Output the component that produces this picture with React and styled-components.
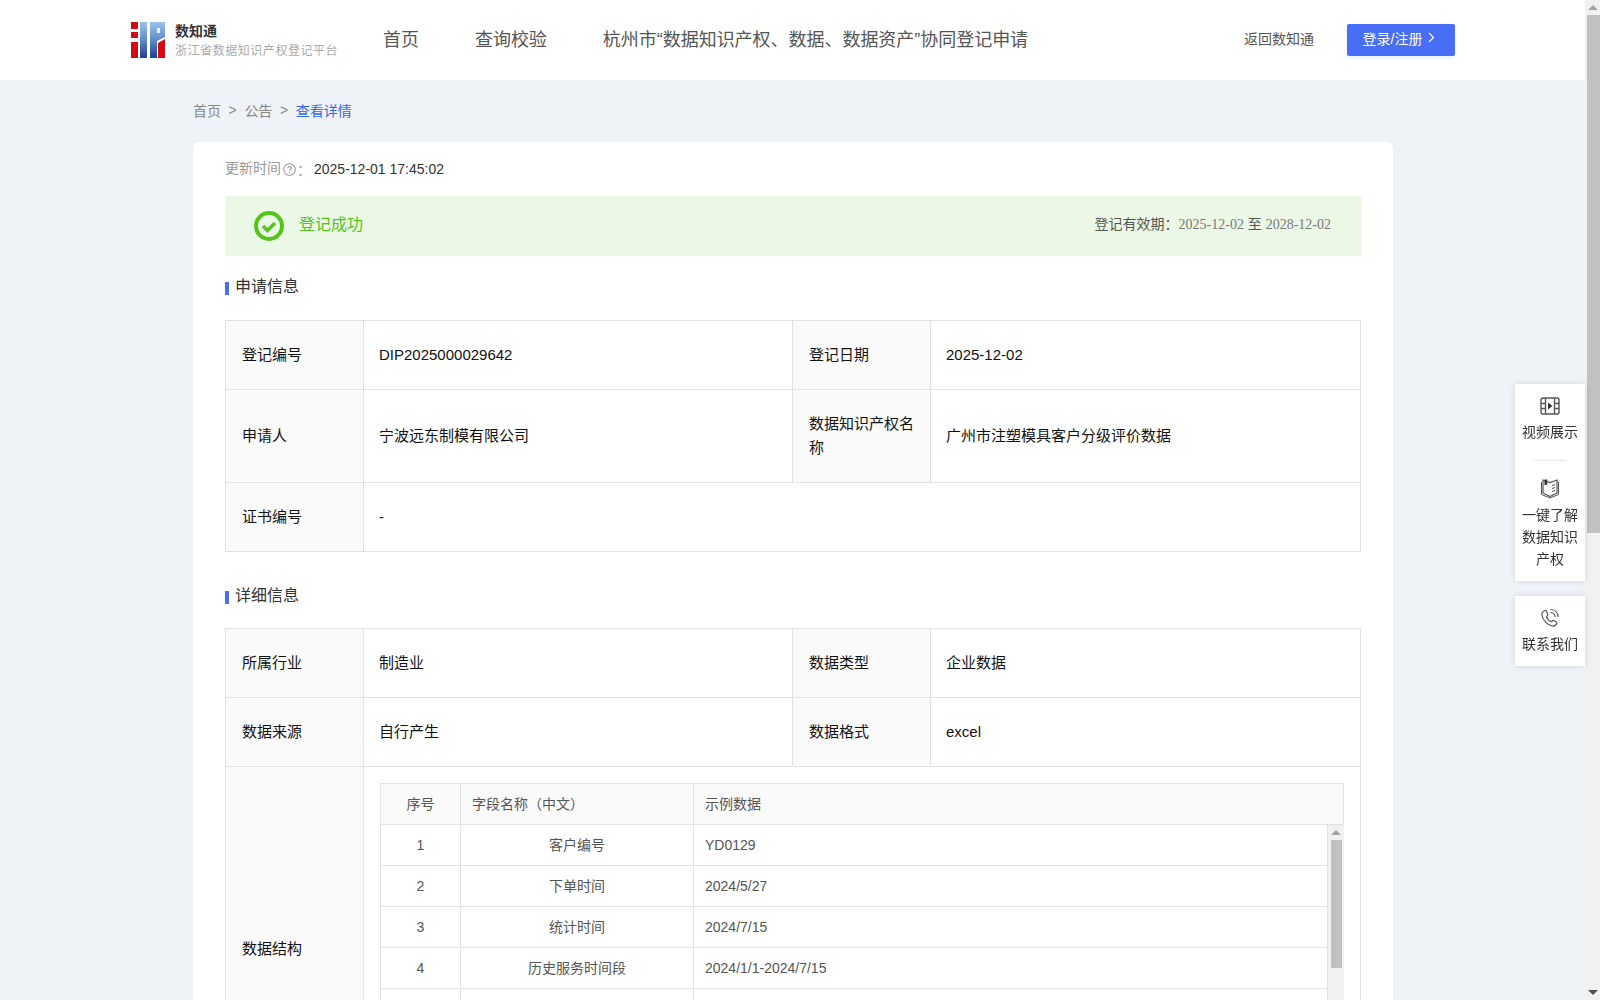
import React from 'react'
import styled, { createGlobalStyle } from 'styled-components'

const GlobalStyle = createGlobalStyle`
  html, body {
    margin: 0;
    padding: 0;
    height: 100%;
    overflow: hidden;
    font-family: "Liberation Sans", "Noto Sans CJK SC", sans-serif;
    font-size: 14px;
    color: #333;
  }
  * {
    box-sizing: border-box;
  }
`

const Page = styled.div`
  height: 100vh;
  display: flex;
  background: #eff2f6;
`
const Content = styled.div`
  flex: 1;
  min-width: 0;
  overflow-y: auto;
  scrollbar-width: none;
`
const Track = styled.div`
  width: ${p => p.$w}px;
  flex: none;
  display: flex;
  flex-direction: column;
  align-items: flex-end;
  background: #f1f1f1;
`
const ArrowBox = styled.div`
  width: 100%;
  height: 15px;
  flex: none;
  display: flex;
  align-items: center;
  justify-content: center;
`
const ArrowUp = styled.i`
  border-left: 5px solid transparent;
  border-right: 5px solid transparent;
  border-bottom: 5px solid #a3a3a3;
`
const ArrowDown = styled.i`
  border-left: 5px solid transparent;
  border-right: 5px solid transparent;
  border-top: 5px solid #505050;
`
const Thumb = styled.div`
  width: ${p => p.$w}px;
  height: ${p => p.$h}px;
  margin-right: ${p => p.$mr}px;
  background: #c1c1c1;
`
const TrackGap = styled.div`
  flex: 1;
`
const Header = styled.header`
  height: 80px;
  background: #fff;
  display: flex;
  align-items: center;
  padding: 0 130px 0 131px;
`
const Brand = styled.div`
  display: flex;
  align-items: center;
  gap: 10px;
  width: 252px;
`
const BrandText = styled.div`
  display: flex;
  flex-direction: column;
  gap: 3px;
`
const BrandName = styled.div`
  font-size: 14px;
  line-height: 18px;
  font-weight: bold;
  color: #333;
`
const BrandSub = styled.div`
  font-size: 12px;
  line-height: 16px;
  letter-spacing: 0.55px;
  color: #aaa;
  white-space: nowrap;
`
const Nav = styled.nav`
  display: flex;
  gap: 56px;
  flex: 1;
`
const NavItem = styled.a`
  font-size: 18px;
  line-height: 24px;
  letter-spacing: -0.03px;
  color: #555;
  white-space: nowrap;
`
const BackLink = styled.a`
  font-size: 14px;
  color: #555;
  margin-right: 33px;
  padding-bottom: 5px;
`
const LoginButton = styled.button`
  width: 108px;
  height: 32px;
  border: none;
  border-radius: 2px;
  background: #476ef5;
  color: #fff;
  font: inherit;
  font-size: 14px;
  display: flex;
  align-items: center;
  justify-content: center;
  gap: 6px;
  padding: 0 4px 5px 0;
  box-shadow: 0 2px 4px rgba(71, 110, 245, 0.12);
`
const Main = styled.main`
  width: 1200px;
  margin-left: 193px;
  padding-bottom: 40px;
`
const Crumbs = styled.div`
  height: 62px;
  display: flex;
  align-items: center;
  gap: 7.6px;
  padding-bottom: 3px;
  font-size: 14px;
  color: #888;
`
const CrumbCurrent = styled.span`
  color: #2f6bf0;
`
const Card = styled.section`
  background: #fff;
  border-radius: 6px;
  padding: 0 32px 32px;
`
const UpdateRow = styled.div`
  height: 54px;
  display: flex;
  align-items: center;
  color: #999;
`
const UpdateLabel = styled.span`
  padding-bottom: 4px;
`
const UpdateValue = styled.span`
  color: #333;
  margin-left: 3px;
`
const Banner = styled.div`
  height: 60px;
  background: #ebf8e6;
  display: flex;
  align-items: center;
  padding: 0 30px 0 29px;
`
const BannerStatus = styled.div`
  display: flex;
  align-items: center;
  gap: 15px;
  flex: 1;
  color: #52c41a;
  font-size: 16px;
`
const BannerText = styled.span`
  padding-bottom: 7px;
`
const Validity = styled.div`
  font-size: 14px;
  color: #555;
  padding-bottom: 7px;
`
const ValidityDate = styled.span`
  font-family: "Liberation Serif", "Noto Sans CJK SC", serif;
  font-size: 14px;
  color: #777;
`
const SectionTitle = styled.h3`
  margin: ${p => p.$first ? '20px 0 22px' : '33px 0 21px'};
  font-weight: normal;
  font-size: 16px;
  line-height: 22px;
  color: #333;
  display: flex;
  align-items: center;
  gap: 6px;
  &::before {
    content: '';
    width: 4px;
    height: 13px;
    margin-top: 3px;
    background: #476ef5;
  }
`
const InfoTable = styled.table`
  width: 1136px;
  table-layout: fixed;
  border-collapse: collapse;
  font-size: 15px;
  line-height: 24px;
  color: #111;
`
const Label = styled.td`
  width: 138px;
  height: ${p => p.$h || 69}px;
  padding: 0 16px;
  background: #fafafa;
  border: 1px solid #e2e2e2;
  vertical-align: middle;
`
const Value = styled.td`
  width: ${p => p.$w ? p.$w + 'px' : 'auto'};
  padding: 0 15px;
  border: 1px solid #e2e2e2;
  vertical-align: middle;
`
const NestedCell = styled.td`
  padding: 16px;
  border: 1px solid #e2e2e2;
`
const FieldTable = styled.table`
  width: 100%;
  table-layout: fixed;
  border-collapse: collapse;
  font-size: 14px;
  color: #555;
  margin-top: ${p => p.$body ? '-1px' : '0'};
`
const FieldHead = styled.th`
  width: ${p => p.$w ? p.$w + 'px' : 'auto'};
  height: 41px;
  padding: 0 11px;
  font-weight: normal;
  background: #fafafa;
  border: 1px solid #e2e2e2;
  text-align: ${p => p.$center ? 'center' : 'left'};
`
const FieldCell = styled.td`
  width: ${p => p.$w ? p.$w + 'px' : 'auto'};
  height: 41px;
  padding: 0 11px;
  border: 1px solid #e2e2e2;
  text-align: ${p => p.$center ? 'center' : 'left'};
`
const FieldBody = styled.div`
  height: 289px;
  display: flex;
`
const FieldRows = styled.div`
  flex: 1;
  min-width: 0;
  overflow: hidden;
`
const Side = styled.aside`
  position: fixed;
  top: 384px;
  right: 15px;
  width: 70px;
  display: flex;
  flex-direction: column;
  gap: 15px;
`
const SideCard = styled.div`
  background: #fff;
  box-shadow: 0 0 6px rgba(0, 0, 0, 0.12);
  padding: 12px 0 ${p => p.$pb || 11}px;
`
const SideItem = styled.div`
  display: flex;
  flex-direction: column;
  align-items: center;
  font-size: 14px;
  line-height: 22px;
  color: #333;
  text-align: center;
  padding: 0 4px;
  svg {
    margin-bottom: 5px;
  }
`
const SideDivider = styled.div`
  width: 32px;
  height: 1px;
  background: #e4e4e4;
  margin: 17px auto 16px;
`
const HintIcon = styled.svg`
  margin: 0 1px 0 2px;
`

const Logo = () => (
  <svg width="34" height="36" viewBox="0 0 34 36">
    <defs>
      <linearGradient id="logoBlue" x1="0" y1="0" x2="0" y2="1">
        <stop offset="0" stopColor="#9cc3ea" />
        <stop offset="0.5" stopColor="#5d8cc9" />
        <stop offset="1" stopColor="#1f3f8f" />
      </linearGradient>
    </defs>
    <path d="M0 0h7v7H0zM0 10h7v6H0zM0 20h7v16H0z" fill="#d40b12" />
    <rect x="9" y="0" width="7" height="36" fill="url(#logoBlue)" />
    <path d="M19 0h15v15l-8 4v17h-7z" fill="url(#logoBlue)" />
    <rect x="26" y="6" width="3" height="5" fill="#e9f1fa" />
    <path d="M27 21l7-4v19h-7z" fill="#d40b12" />
  </svg>
)

const FilmIcon = () => (
  <svg width="20" height="20" viewBox="0 0 20 20" fill="none" stroke="#555" strokeWidth="1.4">
    <rect x="1" y="2" width="18" height="16" rx="2" />
    <path d="M5.500 2v16M14.500 2v16M1 7.500h4.500M1 12.500h4.500M14.500 7.500H19M14.500 12.500H19" />
    <path d="M8 6.500l4.500 3.500L8 13.500z" fill="#333" stroke="none" />
  </svg>
)

const BookIcon = () => (
  <svg width="20" height="22" viewBox="0 0 20 22" fill="none" stroke="#555" strokeWidth="1.2">
    <path d="M3 3v13l7 3.500 7-3.500V3l-7 2.500z" />
    <path d="M1.500 5v12.500L10 21l8.500-3.500V5" strokeWidth="1" />
    <path d="M4.500 2.500v6l1.500-1 1.200 1V2.500z" fill="#333" stroke="none" />
    <path d="M12 8.500l3-1M12 11.500l3-1M12 14.500l3-1" />
  </svg>
)

const PhoneIcon = () => (
  <svg width="20" height="20" viewBox="0 0 20 20" fill="none" stroke="#555" strokeWidth="1.2" strokeLinecap="round">
    <path d="M5 2.500c-2 .8-3.500 2.500-3 5 .8 4.500 5.500 9.500 10 10.500 2.300.5 4-.8 4.800-2.700.2-.6 0-1-.5-1.300l-2.600-1.500c-.5-.3-1-.2-1.300.2l-.9 1.100c-2.300-.8-4.300-3-5-5.200l1-.9c.4-.4.500-.9.200-1.400L6.400 3c-.3-.5-.8-.7-1.400-.5z" />
    <path d="M11 1.500c3.800.3 6.700 3.200 7 7M11 4.500c2.100.2 3.800 1.900 4 4" />
  </svg>
)

const Chevron = () => (
  <svg width="7" height="11" viewBox="0 0 7 11" fill="none" stroke="#fff" strokeWidth="1.2">
    <path d="M1 1l4.500 4.500L1 10" />
  </svg>
)

const QuestionIcon = () => (
  <HintIcon width="13" height="13" viewBox="0 0 13 13" fill="none" stroke="#999" strokeWidth="1.1">
    <circle cx="6.500" cy="6.500" r="5.800" />
    <path d="M4.700 5.200c0-1 .8-1.600 1.800-1.600s1.800.6 1.800 1.500c0 1.300-1.800 1.300-1.800 2.600" />
    <path d="M6.500 9v1" />
  </HintIcon>
)

const CheckCircle = () => (
  <svg width="30" height="30" viewBox="0 0 30 30" fill="none" stroke="#52c41a">
    <circle cx="15" cy="15" r="13" strokeWidth="4" />
    <path d="M9 15l4.500 4.500L21 12" strokeWidth="3.500" />
  </svg>
)

function ScrollBar({ width, thumbWidth, thumbHeight, thumbRight }) {
  return (
    <Track $w={width}>
      <ArrowBox><ArrowUp /></ArrowBox>
      <Thumb $w={thumbWidth} $h={thumbHeight} $mr={thumbRight} />
      <TrackGap />
      <ArrowBox><ArrowDown /></ArrowBox>
    </Track>
  )
}

const fields = [
  ['1', '客户编号', 'YD0129'],
  ['2', '下单时间', '2024/5/27'],
  ['3', '统计时间', '2024/7/15'],
  ['4', '历史服务时间段', '2024/1/1-2024/7/15'],
  ['5', '客户名称', '客户A'],
  ['6', '所属地区', '广州市'],
  ['7', '订单数量', '12'],
]

export default function App() {
  return (
    <Page>
      <GlobalStyle />
      <Content>
        <Header>
          <Brand>
            <Logo />
            <BrandText>
              <BrandName>数知通</BrandName>
              <BrandSub>浙江省数据知识产权登记平台</BrandSub>
            </BrandText>
          </Brand>
          <Nav>
            <NavItem>首页</NavItem>
            <NavItem>查询校验</NavItem>
            <NavItem>杭州市“数据知识产权、数据、数据资产”协同登记申请</NavItem>
          </Nav>
          <BackLink>返回数知通</BackLink>
          <LoginButton>登录/注册<Chevron /></LoginButton>
        </Header>
        <Main>
          <Crumbs>
            <span>首页</span><span>&gt;</span><span>公告</span><span>&gt;</span>
            <CrumbCurrent>查看详情</CrumbCurrent>
          </Crumbs>
          <Card>
            <UpdateRow>
              <UpdateLabel>更新时间</UpdateLabel><QuestionIcon />：<UpdateValue>2025-12-01 17:45:02</UpdateValue>
            </UpdateRow>
            <Banner>
              <BannerStatus><CheckCircle /><BannerText>登记成功</BannerText></BannerStatus>
              <Validity>
                登记有效期：<ValidityDate>2025-12-02</ValidityDate> 至 <ValidityDate>2028-12-02</ValidityDate>
              </Validity>
            </Banner>

            <SectionTitle $first>申请信息</SectionTitle>
            <InfoTable>
              <tbody>
                <tr>
                  <Label>登记编号</Label>
                  <Value $w={429}>DIP2025000029642</Value>
                  <Label>登记日期</Label>
                  <Value>2025-12-02</Value>
                </tr>
                <tr>
                  <Label $h={93}>申请人</Label>
                  <Value>宁波远东制模有限公司</Value>
                  <Label>数据知识产权名称</Label>
                  <Value>广州市注塑模具客户分级评价数据</Value>
                </tr>
                <tr>
                  <Label>证书编号</Label>
                  <Value colSpan={3}>-</Value>
                </tr>
              </tbody>
            </InfoTable>

            <SectionTitle>详细信息</SectionTitle>
            <InfoTable>
              <tbody>
                <tr>
                  <Label>所属行业</Label>
                  <Value $w={429}>制造业</Value>
                  <Label>数据类型</Label>
                  <Value>企业数据</Value>
                </tr>
                <tr>
                  <Label>数据来源</Label>
                  <Value>自行产生</Value>
                  <Label>数据格式</Label>
                  <Value>excel</Value>
                </tr>
                <tr>
                  <Label>数据结构</Label>
                  <NestedCell colSpan={3}>
                    <FieldTable>
                      <thead>
                        <tr>
                          <FieldHead $w={80} $center>序号</FieldHead>
                          <FieldHead $w={233}>字段名称（中文）</FieldHead>
                          <FieldHead>示例数据</FieldHead>
                        </tr>
                      </thead>
                    </FieldTable>
                    <FieldBody>
                      <FieldRows>
                        <FieldTable $body>
                          <tbody>
                            {fields.map(row => (
                              <tr key={row[0]}>
                                <FieldCell $w={80} $center>{row[0]}</FieldCell>
                                <FieldCell $w={233} $center>{row[1]}</FieldCell>
                                <FieldCell>{row[2]}</FieldCell>
                              </tr>
                            ))}
                          </tbody>
                        </FieldTable>
                      </FieldRows>
                      <ScrollBar width={16} thumbWidth={11} thumbHeight={128} thumbRight={2} />
                    </FieldBody>
                  </NestedCell>
                </tr>
              </tbody>
            </InfoTable>
          </Card>
        </Main>
        <Side>
          <SideCard>
            <SideItem><FilmIcon />视频展示</SideItem>
            <SideDivider />
            <SideItem><BookIcon />一键了解数据知识产权</SideItem>
          </SideCard>
          <SideCard>
            <SideItem><PhoneIcon />联系我们</SideItem>
          </SideCard>
        </Side>
      </Content>
      <ScrollBar width={15} thumbWidth={13} thumbHeight={518} thumbRight={0} />
    </Page>
  )
}
